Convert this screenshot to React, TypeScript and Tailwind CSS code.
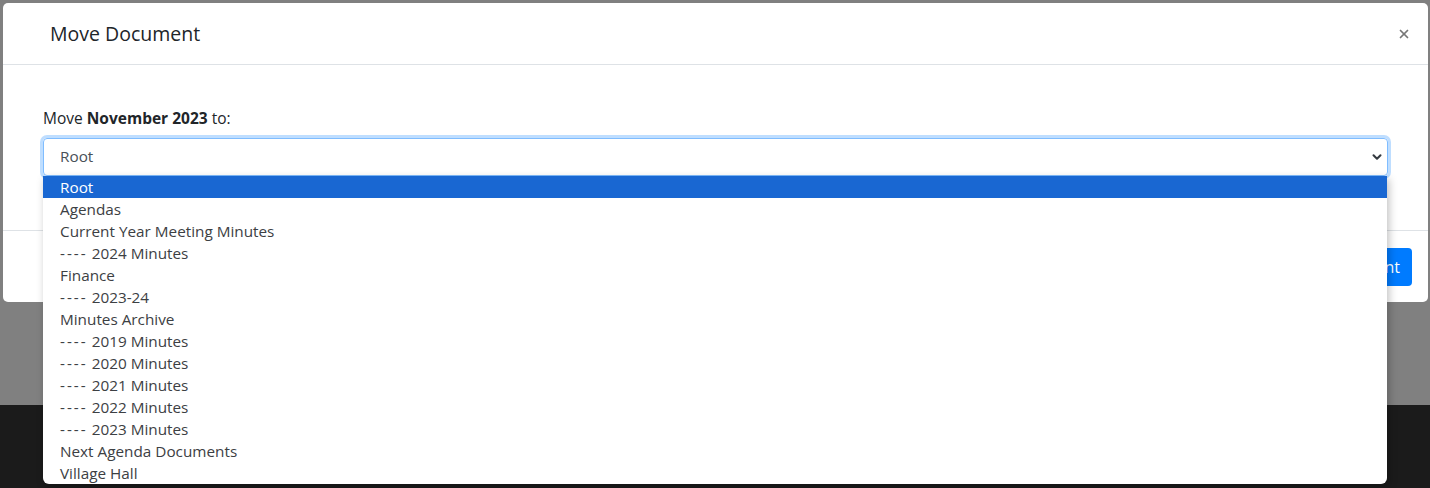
import { X, ChevronDown } from 'lucide-react';

const folders = [
  'Root',
  'Agendas',
  'Current Year Meeting Minutes',
  '---- 2024 Minutes',
  'Finance',
  '---- 2023-24',
  'Minutes Archive',
  '---- 2019 Minutes',
  '---- 2020 Minutes',
  '---- 2021 Minutes',
  '---- 2022 Minutes',
  '---- 2023 Minutes',
  'Next Agenda Documents',
  'Village Hall',
];

// Segoe-style dashes are wider than Open Sans ones, so space them a little
function Label({ text }: { text: string }) {
  if (!text.startsWith('----')) return <>{text}</>;
  return (
    <>
      <span className="tracking-[2px]">----</span>
      {text.slice(4)}
    </>
  );
}

export default function App() {
  return (
    <div
      className="relative h-[488px] w-full overflow-hidden flex flex-col"
      style={{ fontFamily: '"Open Sans", "Noto Sans", sans-serif' }}
    >
      {/* page under the backdrop */}
      <div className="h-[405px] bg-[#808080]" />
      <div className="flex-1 bg-[#1b1b1b]" />

      {/* modal */}
      <div className="absolute left-[3px] top-[3px] w-[1425px] h-[299px] bg-white rounded-[5px] flex flex-col">
        <div className="h-[62px] flex items-center justify-between pl-[47px] pr-[17px] border-b border-[#dee2e6]">
          <h5 className="text-[19.5px] font-medium text-[#212529] pt-[1px]">Move Document</h5>
          <X className="w-[14px] h-[14px] text-[#777]" strokeWidth={3} />
        </div>

        <div className="h-[166px] px-[40px] pt-[42px] border-b border-[#dee2e6]">
          <p className="text-[15.5px] leading-[22px] text-[#212529] mb-[9px]">
            Move <b className="font-bold">November 2023</b> to:
          </p>
          <div className="h-[38px] flex items-center justify-between pl-[16px] pr-[3px] rounded-[4px] border border-[#80bdff] shadow-[0_0_0_3px_rgba(0,123,255,0.25)] text-[15.3px] text-[#495057]">
            <span className="-mt-[1px]">Root</span>
            <ChevronDown className="w-[14px] h-[14px] text-[#343a40]" strokeWidth={3.5} />
          </div>
        </div>

        <div className="flex-1 flex items-center justify-end gap-2 px-[16px]">
          <button className="h-[38px] px-[12px] rounded-[4px] bg-[#6c757d] text-white text-[16px]">
            Close
          </button>
          <button className="h-[38px] px-[12px] rounded-[4px] bg-[#007bff] text-white text-[16px]">
            Move Document
          </button>
        </div>
      </div>

      {/* open select list */}
      <ul className="absolute left-[43px] top-[176px] w-[1344px] bg-white rounded-b-[6px] shadow-[2px_3px_8px_rgba(0,0,0,0.25)] overflow-hidden">
        {folders.map((f, i) => (
          <li
            key={f}
            className={
              i === 0
                ? 'h-[22px] leading-[22px] pl-[17px] text-[15.3px] bg-[#1967d2] text-white'
                : 'h-[22px] leading-[22px] pl-[17px] text-[15.3px] text-[#3c4043]'
            }
          >
            <Label text={f} />
          </li>
        ))}
      </ul>
    </div>
  );
}
